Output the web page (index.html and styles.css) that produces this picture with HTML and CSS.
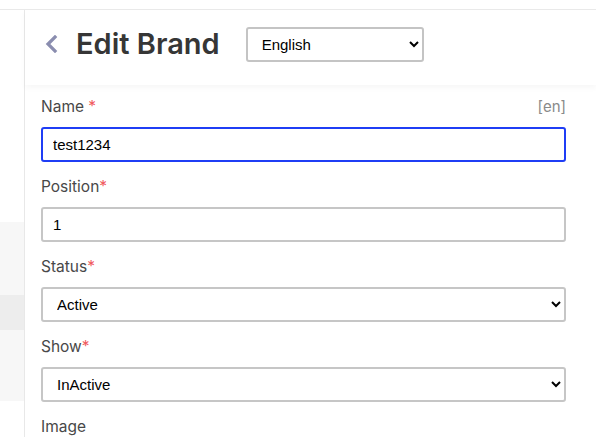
FILE: index.html
```html
<!DOCTYPE html>
<html lang="en">
<head>
<meta charset="utf-8">
<title>Edit Brand</title>
<link rel="stylesheet" href="styles.css">
</head>
<body>
<div class="topbar"></div>
<div class="layout">
  <aside class="sidebar">
    <div class="side-gap"></div>
    <div class="side-item side-item-a"></div>
    <div class="side-item side-item-active"></div>
    <div class="side-item side-item-b"></div>
  </aside>
  <main class="main">
    <header class="page-header">
      <a class="back" href="#" aria-label="Back">
        <svg width="13" height="18" viewBox="0 0 13 18"><polyline points="10,2 3,9 10,16" fill="none" stroke="#8a8daf" stroke-width="3.2" stroke-linecap="square" stroke-linejoin="miter"/></svg>
      </a>
      <h1 class="title">Edit Brand</h1>
      <select class="lang-select">
        <option>English</option>
      </select>
    </header>
    <form class="form">
      <div class="group">
        <div class="label-row">
          <label class="label">Name <span class="req">*</span></label>
          <span class="locale">[en]</span>
        </div>
        <input class="control control-focus" type="text" value="test1234">
      </div>
      <div class="group">
        <label class="label">Position<span class="req">*</span></label>
        <input class="control" type="text" value="1">
      </div>
      <div class="group">
        <label class="label">Status<span class="req">*</span></label>
        <select class="control select"><option>Active</option></select>
      </div>
      <div class="group">
        <label class="label">Show<span class="req">*</span></label>
        <select class="control select"><option>InActive</option></select>
      </div>
      <div class="group group-last">
        <label class="label label-last">Image</label>
      </div>
    </form>
  </main>
</div>
</body>
</html>
```
FILE: styles.css
```css
html, body {
  margin: 0;
  padding: 0;
  background: #ffffff;
  height: 100%;
  overflow: hidden;
}
body {
  font-family: "Inter", "Liberation Sans", sans-serif;
  color: #333;
}
.topbar {
  height: 9px;
  border-bottom: 1px solid #e9e9e9;
  background: #fff;
}
.layout {
  display: flex;
  height: 427px;
  overflow: hidden;
}
.sidebar {
  width: 24px;
  flex: 0 0 24px;
  border-right: 1px solid #e8e8e8;
  display: flex;
  flex-direction: column;
}
.side-gap { height: 212px; flex-shrink: 0; }
.side-item { flex-shrink: 0; }
.side-item-a { height: 73px; background: #f7f7f7; }
.side-item-active { height: 35px; background: #ededed; }
.side-item-b { height: 71px; background: #f7f7f7; }

.main {
  flex: 1;
  display: flex;
  flex-direction: column;
  min-height: 0;
}
.page-header {
  flex: 0 0 75px;
  box-sizing: border-box;
  height: 75px;
  display: flex;
  align-items: center;
  padding: 0 0 7px 20px;
  box-shadow: 0 3px 6px rgba(0, 0, 0, 0.035);
  position: relative;
  z-index: 1;
}
.back {
  display: flex;
  width: 13px;
  height: 18px;
  margin-right: 18px;
}
.title {
  margin: 0 26px 0 0;
  font-family: "Inter", sans-serif;
  font-weight: 600;
  font-size: 29px;
  color: #363636;
  letter-spacing: 0;
  line-height: 36px;
}
.lang-select {
  width: 178px;
  height: 35px;
  border: 2px solid #c4c4c4;
  border-radius: 3px;
  background: #fff;
  font-family: "Liberation Sans", Arial, sans-serif;
  font-size: 15px;
  color: #000;
  padding: 0 8px 0 10px;
}
.form {
  flex-shrink: 0;
  padding: 12px 30px 0 16px;
  display: flex;
  flex-direction: column;
}
.group {
  flex-shrink: 0;
  display: flex;
  flex-direction: column;
  margin-bottom: 15px;
}
.group-last { margin-bottom: 0; }
.label-row {
  display: flex;
  justify-content: space-between;
}
.label {
  font-family: "Inter", sans-serif;
  font-size: 15.5px;
  line-height: 20px;
  color: #484848;
  margin-bottom: 10px;
}
.label-last { margin-bottom: 0; }
.req {
  color: #f0595c;
}
.locale {
  font-family: "Inter", sans-serif;
  font-size: 15px;
  line-height: 20px;
  color: #8a8a8a;
}
.control {
  box-sizing: border-box;
  width: 100%;
  height: 35px;
  flex-shrink: 0;
  border: 2px solid #c6c6c6;
  border-radius: 3px;
  background: #fff;
  font-family: "Liberation Sans", Arial, sans-serif;
  font-size: 15px;
  color: #000;
  padding: 0 10px;
  outline: none;
  margin: 0;
}
.control-focus {
  border-color: #1f3df5;
}
.select {
  padding: 0 6px 0 10px;
}
```
